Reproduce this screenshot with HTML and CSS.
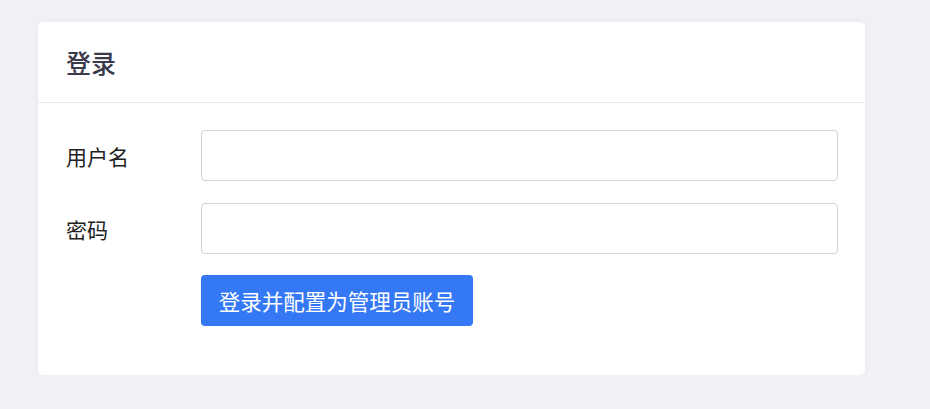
FILE: index.html
```html
<!DOCTYPE html>
<html lang="zh-CN">
<head>
<meta charset="utf-8">
<title>登录</title>
<link rel="stylesheet" href="styles.css">
</head>
<body>
<div class="card">
  <div class="card-header">
    <h2 class="card-title">登录</h2>
  </div>
  <form class="card-body">
    <div class="form-row">
      <label class="form-label">用户名</label>
      <input class="form-input" type="text">
    </div>
    <div class="form-row">
      <label class="form-label">密码</label>
      <input class="form-input" type="password">
    </div>
    <div class="form-row form-actions">
      <span class="form-label"></span>
      <button class="btn-primary" type="button">登录并配置为管理员账号</button>
    </div>
  </form>
</div>
</body>
</html>
```
FILE: styles.css
```css
* { box-sizing: border-box; }
html, body { margin: 0; padding: 0; }
body {
  background: #f0f0f6;
  font-family: "Noto Sans CJK SC", "Noto Sans", sans-serif;
  padding: 22px 0 0 38px;
}
.card {
  width: 827px;
  height: 353px;
  background: #fff;
  border-radius: 5px;
  box-shadow: 0 0 6px rgba(40, 40, 80, 0.04);
}
.card-header {
  height: 81px;
  padding: 0 28px;
  display: flex;
  align-items: center;
  border-bottom: 1px solid #ebebf0;
}
.card-title {
  margin: 0;
  font-size: 25px;
  font-weight: 500;
  color: #3a3a4c;
}
.card-body {
  padding: 27px 27px 0 28px;
  display: flex;
  flex-direction: column;
  gap: 22px;
}
.form-row {
  display: flex;
  align-items: center;
}
.form-actions { margin-top: -1px; }
.form-label {
  width: 135px;
  flex: none;
  font-size: 21px;
  color: #222;
}
.form-input {
  flex: 1;
  height: 51px;
  border: 1px solid #d2d2d8;
  border-radius: 4px;
  background: #fff;
  font-size: 18px;
  padding: 0 12px;
  outline: none;
}
.btn-primary {
  height: 51px;
  width: 272px;
  border: none;
  border-radius: 4px;
  background: #3478f6;
  color: #fff;
  font-family: "Noto Sans CJK SC", "Noto Sans", sans-serif;
  font-size: 21.5px;
  padding: 0;
}
```
